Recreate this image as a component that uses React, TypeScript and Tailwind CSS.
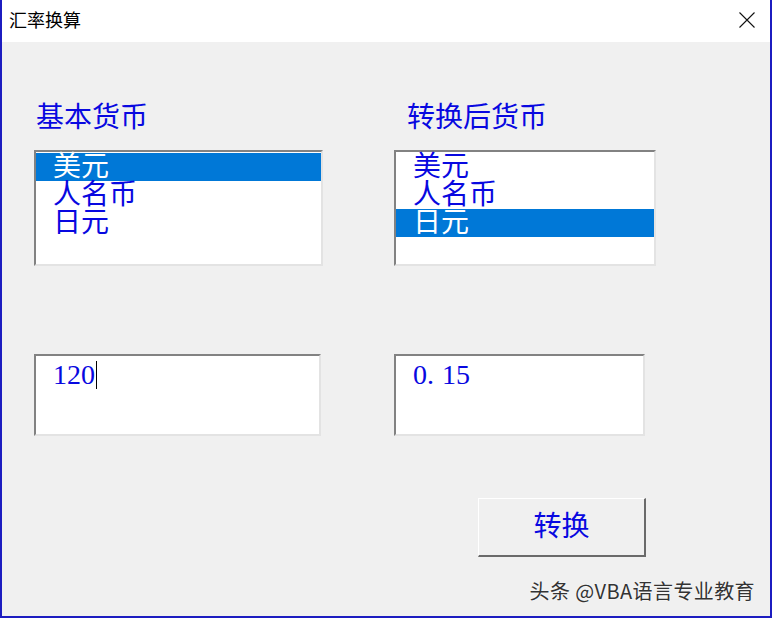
import { useState } from 'react';

const currencies = ['美元', '人名币', '日元'];

const serif = { fontFamily: '"Liberation Serif", "Noto Sans CJK SC", serif' };
const sans = { fontFamily: '"Noto Sans CJK SC", "Liberation Sans", sans-serif' };

function ListBox({ selected, width, onSelect }: { selected: number; width: string; onSelect: (i: number) => void }) {
  return (
    <div
      className={`${width} h-[116px] bg-white border-2 border-t-[#828282] border-l-[#828282] border-b-[#e3e3e3] border-r-[#e3e3e3] pt-px`}
    >
      {currencies.map((c, i) => (
        <div
          key={c}
          onClick={() => onSelect(i)}
          className={`h-[28px] leading-[28px] text-[28px] pl-[17px] cursor-default ${
            i === selected ? 'bg-[#0078d7] text-white' : 'text-[#0808e0]'
          }`}
          style={serif}
        >
          {c}
        </div>
      ))}
    </div>
  );
}

export default function App() {
  const [base, setBase] = useState(0);
  const [target, setTarget] = useState(2);

  return (
    <div className="w-[772px] h-[618px] bg-[#f0f0f0] border-l-2 border-r-2 border-b-2 border-[#1c1cc0] flex flex-col overflow-hidden">
      {/* title bar */}
      <div className="h-[42px] bg-white flex items-center justify-between pl-[7px] pr-[15px] shrink-0">
        <span className="text-[18px] text-black leading-none -mt-[4px]" style={sans}>
          汇率换算
        </span>
        <svg width="16" height="16" viewBox="0 0 16 16" className="-mt-[3px]">
          <path d="M0.5 0.5 L15.5 15.5 M15.5 0.5 L0.5 15.5" stroke="#111" strokeWidth="1.1" fill="none" />
        </svg>
      </div>

      <div className="flex-1 flex flex-col pl-[32px]">
        <div className="flex mt-[62px]">
          {/* left column */}
          <div className="w-[360px] flex flex-col">
            <div className="text-[28px] leading-[28px] text-[#0808e0] pl-[2px] h-[28px]" style={serif}>
              基本货币
            </div>
            <div className="mt-[18px]">
              <ListBox selected={base} width="w-[289px]" onSelect={setBase} />
            </div>
            <div className="mt-[88px] w-[287px] h-[82px] bg-white border-2 border-t-[#828282] border-l-[#828282] border-b-[#e3e3e3] border-r-[#e3e3e3] pl-[17px] pt-[2px]">
              <span className="text-[28px] leading-[34px] text-[#0808e0] inline-flex items-center" style={serif}>
                120
                <span className="inline-block w-px h-[28px] bg-black ml-px" />
              </span>
            </div>
          </div>

          {/* right column */}
          <div className="flex flex-col">
            <div className="text-[28px] leading-[28px] text-[#0808e0] pl-[13px] h-[28px]" style={serif}>
              转换后货币
            </div>
            <div className="mt-[18px]">
              <ListBox selected={target} width="w-[262px]" onSelect={setTarget} />
            </div>
            <div className="mt-[88px] w-[251px] h-[82px] bg-white border-2 border-t-[#828282] border-l-[#828282] border-b-[#e3e3e3] border-r-[#e3e3e3] pl-[17px] pt-[2px]">
              <span className="text-[28px] leading-[34px] text-[#0808e0]" style={serif}>
                0.<span className="ml-[8px]">15</span>
              </span>
            </div>
          </div>
        </div>

        <div className="mt-[62px] pl-[444px]">
          <button
            className="w-[168px] h-[59px] bg-[#f0f0f0] border-t border-l border-t-white border-l-white border-b-2 border-r-2 border-b-[#6a6a6a] border-r-[#6a6a6a] text-[28px] text-[#0808e0] flex items-center justify-center"
            style={serif}
          >
            转换
          </button>
        </div>

        <div className="flex justify-end pr-[15px] mt-[22px]">
          <span
            className="text-[20px] leading-[24px] text-[#333333] tracking-[0.4px] [text-shadow:0_0_2px_#ffffff]"
            style={sans}
          >
            头条 @VBA语言专业教育
          </span>
        </div>
      </div>
    </div>
  );
}
